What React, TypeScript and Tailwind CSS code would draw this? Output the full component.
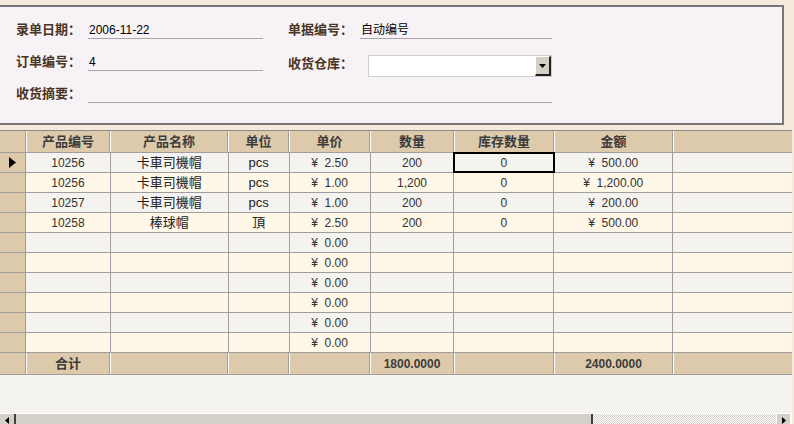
import React from 'react';

const font = { fontFamily: '"Liberation Sans", "Noto Sans CJK SC", sans-serif' };

const widths = [84, 118, 61, 81, 84, 100, 119, 119];
const headers = ['产品编号', '产品名称', '单位', '单价', '数量', '库存数量', '金额', ''];

const rows: string[][] = [
  ['10256', '卡車司機帽', 'pcs', '¥  2.50', '200', '0', '¥  500.00', ''],
  ['10256', '卡車司機帽', 'pcs', '¥  1.00', '1,200', '0', '¥  1,200.00', ''],
  ['10257', '卡車司機帽', 'pcs', '¥  1.00', '200', '0', '¥  200.00', ''],
  ['10258', '棒球帽', '頂', '¥  2.50', '200', '0', '¥  500.00', ''],
  ['', '', '', '¥  0.00', '', '', '', ''],
  ['', '', '', '¥  0.00', '', '', '', ''],
  ['', '', '', '¥  0.00', '', '', '', ''],
  ['', '', '', '¥  0.00', '', '', '', ''],
  ['', '', '', '¥  0.00', '', '', '', ''],
  ['', '', '', '¥  0.00', '', '', '', ''],
];

const totals = ['合计', '', '', '', '1800.0000', '', '2400.0000', ''];

function Field({ label, value, w }: { label: string; value?: string; w: string }) {
  return (
    <div className="flex items-end h-[22px]">
      <span className="w-[72px] text-[13px] font-bold text-[#4a3422] leading-none pb-[3px]">{label}</span>
      <div className={`${w} h-[22px] border-b border-[#a8a4a8] text-[12px] text-black pl-[1px] flex items-end pb-[2px] leading-none`}>
        {value}
      </div>
    </div>
  );
}

export default function App() {
  return (
    <div className="w-[794px] h-[424px] bg-[#f5eadb] overflow-hidden relative" style={font}>
      {/* top form panel */}
      <div className="mt-[5px] w-[784px] h-[120px] bg-[#f6f2f6] border-t-2 border-r-2 border-b-2 border-[#767676] pl-[16px] pt-[10px]">
        <div className="flex gap-[25px]">
          <Field label="录单日期：" value="2006-11-22" w="w-[175px]" />
          <Field label="单据编号：" value="自动编号" w="w-[192px]" />
        </div>
        <div className="flex gap-[25px] mt-[10px]">
          <Field label="订单编号：" value="4" w="w-[175px]" />
          <div className="flex items-start h-[22px]">
            <span className="w-[80px] text-[13px] font-bold text-[#4a3422] leading-none pt-[8px]">收货仓库：</span>
            <div className="w-[184px] h-[22px] mt-[6px] bg-white border border-[#cfcdcf] flex justify-end items-stretch">
              <div className="w-[16px] bg-[#d4d0c8] border-l border-t border-white border-r-2 border-b-2 border-r-[#202020] border-b-[#202020] flex items-center justify-center">
                <svg width="7" height="4" viewBox="0 0 7 4"><path d="M0 0h7L3.5 4z" fill="#000" /></svg>
              </div>
            </div>
          </div>
        </div>
        <div className="mt-[10px]">
          <Field label="收货摘要：" w="w-[464px]" />
        </div>
      </div>

      {/* grid */}
      <div className="mt-[5px] w-[792px] h-[294px] bg-[#f5f3ef] border-t border-[#8a8a8a] text-[12px] text-[#333]">
        <div className="flex h-[22px] bg-[#ddcaab] border-b border-[#a09ca0]">
          <div className="w-[26px] border-r border-[#a09ca0]" />
          {headers.map((h, i) => (
            <div
              key={i}
              style={{ width: widths[i] }}
              className={`border-l border-white font-bold text-[13px] text-[#3c3c3c] flex items-center justify-center ${i < 7 ? 'border-r border-r-[#a09ca0]' : ''}`}
            >
              {h}
            </div>
          ))}
        </div>
        {rows.map((r, ri) => (
          <div key={ri} className={`flex h-[20px] border-b border-[#a09ca0] ${ri % 2 === 0 ? 'bg-[#f5f3ef]' : 'bg-[#fff7e8]'}`}>
            <div className="w-[26px] bg-[#ddcaab] border-r border-[#a09ca0] flex items-center pl-[9px]">
              {ri === 0 && (
                <svg width="7" height="11" viewBox="0 0 7 11"><path d="M0 0l7 5.5L0 11z" fill="#000" /></svg>
              )}
            </div>
            {r.map((c, ci) => (
              <div
                key={ci}
                style={{ width: widths[ci] + (ci === 0 ? 1 : 0) }}
                className={`flex items-center justify-center whitespace-pre ${ci < 7 ? 'border-r border-[#a09ca0]' : ''} ${ri === 0 && ci === 5 ? 'outline-2 outline-black -outline-offset-1' : ''} ${ci === 1 || ci === 2 ? 'text-[13px] text-[#222]' : ''}`}
              >
                {c}
              </div>
            ))}
          </div>
        ))}
        <div className="flex h-[22px] bg-[#ddcaab] border-b border-[#a09ca0] font-bold text-[#3c3c3c]">
          <div className="w-[26px] border-r border-[#a09ca0]" />
          {totals.map((t, i) => (
            <div
              key={i}
              style={{ width: widths[i] }}
              className={`border-l border-white flex items-center justify-center ${i < 7 ? 'border-r border-r-[#a09ca0]' : ''} ${i === 0 ? 'text-[13px]' : ''}`}
            >
              {t}
            </div>
          ))}
        </div>
      </div>

      {/* horizontal scrollbar */}
      <div className="absolute left-0 top-[413px] w-[792px] h-[14px] flex border-t border-white bg-[#d4d0c8]">
        <div className="w-[16px] border-r-2 border-[#404040] flex items-center justify-center">
          <svg width="4" height="7" viewBox="0 0 4 7"><path d="M4 0v7L0 3.5z" fill="#000" /></svg>
        </div>
        <div className="w-[577px] border-r-2 border-[#404040]" />
        <div className="flex-1 bg-[repeating-conic-gradient(#d4d0c8_0%_25%,#ffffff_0%_50%)] bg-[length:2px_2px]" />
        <div className="w-[16px] border-l border-white border-r-2 border-[#404040] flex items-center justify-center">
          <svg width="4" height="7" viewBox="0 0 4 7"><path d="M0 0v7L4 3.5z" fill="#000" /></svg>
        </div>
      </div>
    </div>
  );
}
